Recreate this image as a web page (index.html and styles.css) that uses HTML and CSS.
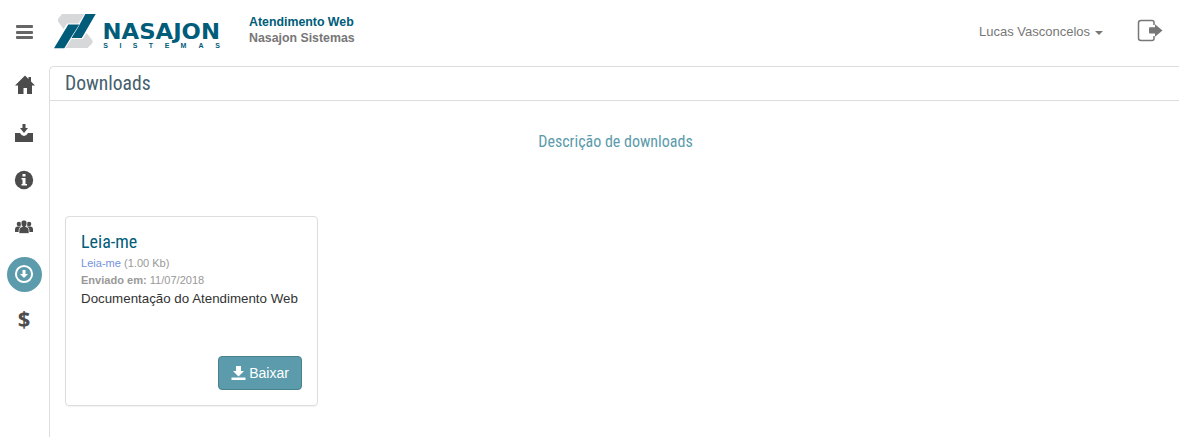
FILE: index.html
```html
<!DOCTYPE html>
<html lang="pt-BR">
<head>
<meta charset="utf-8">
<title>Downloads - Atendimento Web</title>
<link rel="stylesheet" href="styles.css">
</head>
<body>
<header class="topbar">
  <button class="menu-toggle" aria-label="Menu"><span></span><span></span><span></span></button>
  <svg class="logo" width="168" height="40" viewBox="0 0 168 40" role="img" aria-label="Nasajon Sistemas">
    <path fill="#d6d8da" d="M8 2H30.500L24.500 11.500H13L9.500 17L4 9.500V7Z"/>
    <path fill="#d6d8da" d="M33.600 36H11.600L17.300 27H28.600L32.600 21L38.500 28.500V31Z"/>
    <path class="logo-mark" d="M0 36.300L14.300 12.500H25.300L16.600 26L10.300 36.300Z"/>
    <path class="logo-mark" d="M31.300 2H41.700L27.800 25.900H17.500L24.300 15Z"/>
    <text class="logo-name" x="48.500" y="26.500" textLength="117.500" lengthAdjust="spacingAndGlyphs">NASAJON</text>
    <g class="logo-sub"><text x="51.500" y="36">S</text><text x="66.500" y="36">I</text><text x="81" y="36">S</text><text x="97" y="36">T</text><text x="113" y="36">E</text><text x="129.500" y="36">M</text><text x="147" y="36">A</text><text x="163.500" y="36">S</text></g>
  </svg>
  <div class="brand"><strong>Atendimento Web</strong><span>Nasajon Sistemas</span></div>
  <div class="user">Lucas Vasconcelos<i class="caret"></i></div>
  <svg class="logout" width="27" height="24" viewBox="0 0 27 24">
    <path d="M17 6V3.500Q17 1.500 15 1.500H4Q1.500 1.500 1.500 4V19Q1.500 21.500 4 21.500H15Q17 21.500 17 19.500V17" fill="none" stroke="#777" stroke-width="1.500"/>
    <path d="M13 8.300H18V5.200L25.500 11.500L18 17.800V14.500H13Q12 14.500 12 13.500V9.300Q12 8.300 13 8.300Z" fill="#777"/>
  </svg>
</header>
<div class="shell">
  <nav class="sidebar">
    <a class="item"><svg width="20" height="20" viewBox="0 0 20 20"><path d="M10 .5L13.500 4V2H16V6.500L20 10.500H17V19H12V13H8.500V19H3V10.500H0Z"/></svg></a>
    <a class="item"><svg width="20" height="20" viewBox="0 0 20 20"><path d="M8.500 1H11.500V5H14L10 10L6 5H8.500Z"/><path d="M1 10H6Q7.500 13 10 13T14 10H19V19H1Z"/></svg></a>
    <a class="item"><svg width="20" height="20" viewBox="0 0 20 20"><circle cx="10" cy="10" r="9.200"/><path fill="#fff" d="M8.500 4H11.500V6.500H8.500ZM7.500 8H11.500V14H13V15.500H7.500V14H8.500V9.500H7.500Z"/></svg></a>
    <a class="item"><svg width="20" height="20" viewBox="0 0 20 20"><circle cx="5" cy="7" r="2.300"/><circle cx="15" cy="7" r="2.300"/><path d="M1 15V12Q1 10 3 9.500H7L5.500 15ZM19 15V12Q19 10 17 9.500H13L14.500 15Z"/><path stroke="#fff" stroke-width=".7" d="M10 3Q13 3 13 6T11.500 9.500Q15 10 15 13V16.500H5V13Q5 10 8.500 9.500Q7 9 7 6T10 3Z"/></svg></a>
    <a class="item active"><svg width="20" height="20" viewBox="0 0 20 20"><circle cx="10" cy="10" r="8.100" fill="none" stroke="#fff" stroke-width="2"/><path d="M8.500 6H11.500V10H14L10 14L6 10H8.500Z"/></svg></a>
    <a class="item dollar">$</a>
  </nav>
  <main class="panel">
    <h1>Downloads</h1>
    <p class="description">Descrição de downloads</p>
    <article class="card">
      <h2>Leia-me</h2>
      <div class="meta"><a>Leia-me</a> (1.00 Kb)</div>
      <div class="meta"><b>Enviado em:</b> 11/07/2018</div>
      <p class="text">Documentação do Atendimento Web</p>
      <button class="download"><svg width="15" height="15" viewBox="0 0 15 15"><path fill="#fff" d="M5 0H10V5H13L7.500 10.500L2 5H5ZM.5 11.500H14.500V14H.5Z"/></svg>Baixar</button>
    </article>
  </main>
</div>
</body>
</html>
```
FILE: styles.css
```css
* { box-sizing: border-box; }
body { margin: 0; height: 437px; overflow: hidden; background: #fff; color: #333; font: 13px/18px "Liberation Sans", Arial, sans-serif; }
.topbar { height: 66px; display: flex; align-items: flex-start; }
.menu-toggle { width: 17px; height: 14px; margin: 25px 21px 0 16px; padding: 0; border: 0; background: none; display: flex; flex-direction: column; justify-content: space-between; }
.menu-toggle span { height: 3px; border-radius: 1px; background: #666; }
.logo { margin-top: 12px; }
.logo-mark { fill: #005c79; }
.logo-name { fill: #005c79; font: bold 20.5px "DejaVu Sans", sans-serif; }
.logo-sub { fill: #005c79; font: bold 7px "Liberation Sans", sans-serif; text-anchor: middle; }
.brand { margin: 14px 0 0 27px; display: flex; flex-direction: column; font-size: 12.35px; line-height: 16px; font-weight: bold; color: #777; }
.brand strong { color: #005c79; }
.user { margin: 23px 0 0 auto; color: #777; display: flex; align-items: center; }
.caret { margin: 2px 0 0 5px; border: 4px solid transparent; border-top-color: #777; border-bottom: 0; }
.logout { margin: 19px 15px 0 34px; }
.shell { display: flex; height: 371px; }
.sidebar { width: 49px; padding: 1px 0 0 7px; display: flex; flex-direction: column; gap: 12.5px; }
.item { width: 35px; height: 35px; display: flex; align-items: center; justify-content: center; border-radius: 50%; fill: #4c4c4c; }
.item svg { margin-right: 1px; }
.item:first-child svg { margin-right: 0; }
.item:nth-child(2) svg { margin-top: 1px; }
.item.active { background: #5b9bac; fill: #fff; }
.item.active svg { margin-bottom: 1px; }
.dollar { color: #4c4c4c; font: bold 22px/30px "Open Sans", sans-serif; margin-top: -4px; padding-right: 1px; }
.panel { flex: 1; border: 1px solid #ddd; border-right: 0; border-bottom: 0; border-top-left-radius: 5px; }
h1, h2, .description { font-family: "Roboto Condensed", Roboto, sans-serif; font-stretch: 75%; font-weight: 400; margin: 0; }
h1 { height: 34px; padding-left: 15px; border-bottom: 1px solid #ddd; font-size: 19.6px; line-height: 33px; color: #45606d; }
.description { margin: 30px 0 63px 2px; text-align: center; font-size: 16px; line-height: 22px; color: #5b9bac; }
.card { width: 253px; height: 190px; margin-left: 15px; padding: 13px 15px 15px; border: 1px solid #ddd; border-radius: 4px; box-shadow: 0 1px 1px rgba(0,0,0,.05); display: flex; flex-direction: column; }
h2 { margin-bottom: 2px; font-size: 18px; line-height: 23px; color: #005c79; }
.meta { font-size: 11.05px; line-height: 17px; color: #999; }
.meta a { color: #7493dd; }
.text { margin: 1px 0 0; font-size: 13.33px; line-height: 18px; white-space: nowrap; }
.download { width: 84px; height: 34px; margin: auto 0 0 auto; padding: 0; border: 1px solid #48828f; border-radius: 4px; background: #5b9bac; color: #fff; font: 14px "Liberation Sans", Arial, sans-serif; display: flex; align-items: center; justify-content: center; gap: 3px; }
```
